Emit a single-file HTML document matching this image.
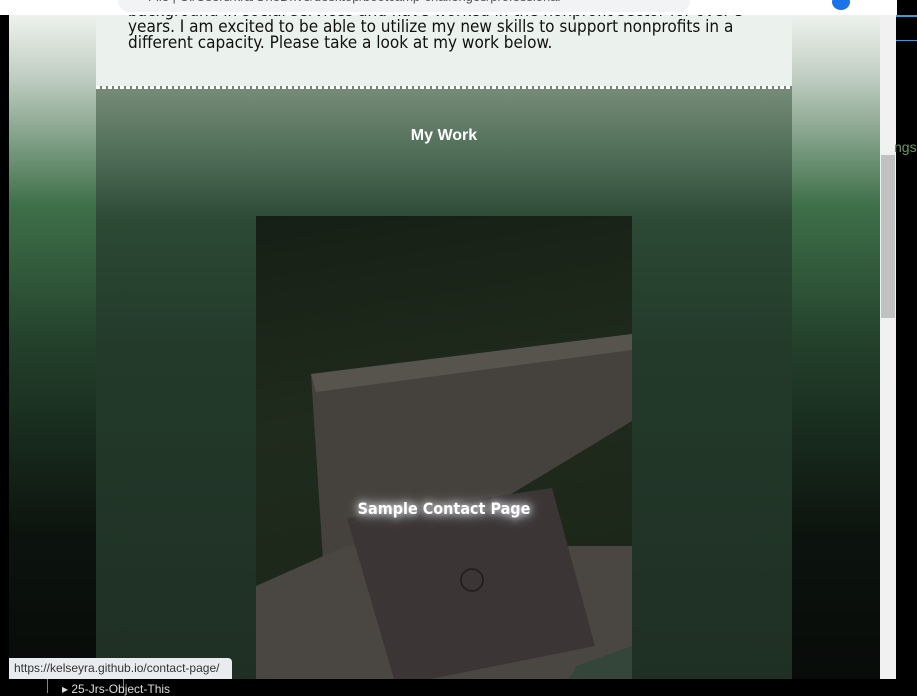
<!DOCTYPE html>
<html><head><style>
*{margin:0;padding:0;box-sizing:border-box}
body{width:917px;height:693px;background:#000;position:relative;overflow:hidden;font-family:"Liberation Sans",sans-serif}
#chrome{position:absolute;left:0;top:0;width:897px;height:15px;background:#fff}
#url{position:absolute;left:118px;top:-10px;width:572px;height:22px;border-radius:11px;background:#f1f3f4;color:#555;font-size:13px;padding:0 0 0 30px;line-height:14px;overflow:hidden}
#page{position:absolute;left:9px;top:15px;width:871px;height:664px;background:linear-gradient(#eef2ee 0px,#c2cfc4 60px,#3e7049 190px,#23402b 330px,#0c130e 520px,#080b09 664px);overflow:hidden}
#col{position:absolute;left:87px;top:0;width:696px;height:664px}
#top{position:absolute;top:0;left:0;width:696px;height:71px;background:#ebf1ed;font-size:17px;line-height:16px;color:#111;font-family:"DejaVu Sans Condensed","Liberation Sans Narrow","Liberation Sans",sans-serif}
#txt{position:absolute;left:32px;top:-12px}
#dash{position:absolute;top:71px;left:0;width:696px;height:3px;background:repeating-linear-gradient(90deg,#fff 0 4px,#6f8873 4px 6px)}
#work{position:absolute;top:74px;left:0;width:696px;height:590px;background:linear-gradient(#758b78 0px,#52705a 60px,#2c4a35 130px,#233a2a 260px,#1f2f24 590px)}
h2{position:absolute;top:38px;width:100%;text-align:center;color:#fff;font-size:16px;font-weight:bold}
#img{position:absolute;left:160px;top:127px;width:376px;height:470px;overflow:hidden;background:linear-gradient(170deg,#161f15 0,#1f2b1c 40%,#1a2418 100%)}
#sb{position:absolute;left:880px;top:15px;width:16px;height:664px;background:#f1f1f1}
#thumb{position:absolute;left:881px;top:155px;width:14px;height:163px;background:#c1c1c1}
#status{position:absolute;left:9px;top:658px;width:223px;height:21px;background:#e9ecef;border-radius:0 4px 0 0;font-size:12px;color:#333;padding:3px 0 0 5px}
</style></head><body>
<div id="chrome"><div id="url">File | C:/Users/kra/OneDrive/desktop/bootcamp-challenges/professional</div>
<div style="position:absolute;left:832px;top:-6px;width:18px;height:16px;border-radius:50%;background:#1a73e8"></div></div>
<div id="page">
<div id="col">
<div id="top"><div id="txt"><div>background in social services and have worked in the nonprofit sector for over 5</div><div>years. I am excited to be able to utilize my new skills to support nonprofits in a</div><div>different capacity. Please take a look at my work below.</div></div></div>
<div id="dash"></div>
<div id="work">
<h2>My Work</h2>
<div id="img">
<svg width="376" height="470" style="position:absolute;left:0;top:0">
<polygon points="55,158 376,118 376,205 70,390" fill="#45413c"/>
<polygon points="55,158 376,118 376,134 60,176" fill="#57534d"/>
<polygon points="0,370 90,330 376,330 376,470 0,470" fill="#4a4742"/>
<polygon points="91,302 296,272 339,430 140,470" fill="#3b3535"/>
<polygon points="320,450 376,430 376,470 310,470" fill="#34453a"/>
<circle cx="216" cy="364" r="11" fill="none" stroke="#1e1b1b" stroke-width="1.5"/>
</svg>
<div style="position:absolute;top:283px;width:100%;text-align:center;color:#fff;font-weight:bold;font-size:16px;font-family:'DejaVu Sans Condensed','Liberation Sans',sans-serif;text-shadow:0 0 8px #fff,0 0 14px #cde">Sample Contact Page</div>
</div>
</div>
</div>
</div>
<div id="sb"></div><div id="thumb"></div>
<div style="position:absolute;left:896px;top:15px;width:21px;height:2px;background:#3a9bd6"></div>
<div style="position:absolute;left:896px;top:40px;width:21px;height:1px;background:#3a9bd6"></div>
<div style="position:absolute;left:894px;top:139px;color:#6a9a5a;font-size:14px">ngs</div>
<div id="status">https://kelseyra.github.io/contact-page/</div>
<div style="position:absolute;left:47px;top:679px;width:1px;height:14px;background:#3a9bd6"></div>
<div style="position:absolute;left:123px;top:679px;width:1px;height:14px;background:#3a9bd6"></div>
<div style="position:absolute;left:62px;top:682px;color:#ddd;font-size:12px">▸ 25-Jrs-Object-This</div>
</body></html>
